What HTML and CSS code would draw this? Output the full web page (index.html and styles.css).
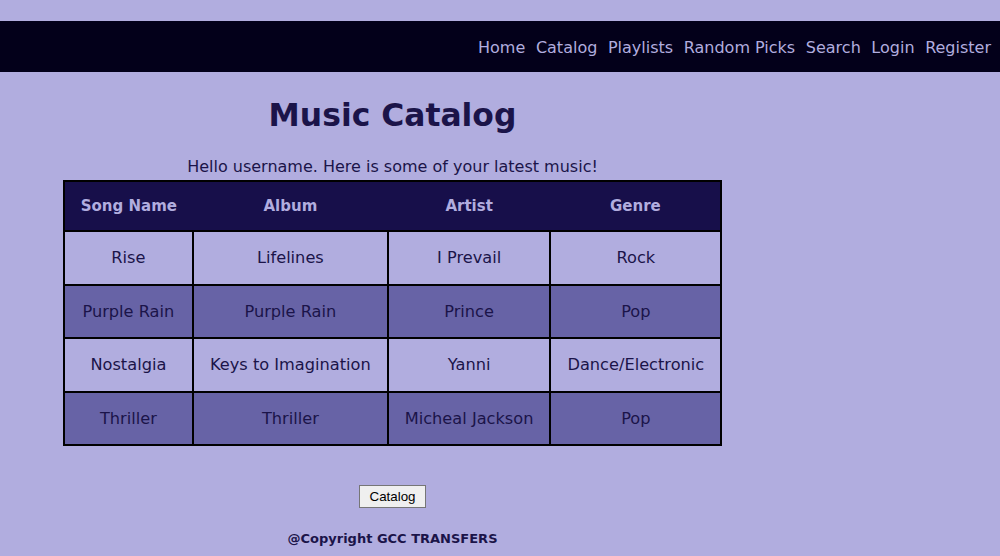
FILE: index.html
```html
<!DOCTYPE html>
<html>
<head>
<meta charset="utf-8">
<title>Music Catalog</title>
<link rel="stylesheet" href="styles.css">
</head>
<body>
<header class="topbar">
  <nav class="nav">
    <a href="#">Home</a>
    <a href="#">Catalog</a>
    <a href="#">Playlists</a>
    <a href="#">Random Picks</a>
    <a href="#">Search</a>
    <a href="#">Login</a>
    <a href="#">Register</a>
  </nav>
</header>
<main class="content">
  <h1 class="title">Music Catalog</h1>
  <p class="greeting">Hello username. Here is some of your latest music!</p>
  <table class="catalog">
    <thead>
      <tr><th>Song Name</th><th>Album</th><th>Artist</th><th>Genre</th></tr>
    </thead>
    <tbody>
      <tr><td>Rise</td><td>Lifelines</td><td>I Prevail</td><td>Rock</td></tr>
      <tr class="alt"><td>Purple Rain</td><td>Purple Rain</td><td>Prince</td><td>Pop</td></tr>
      <tr><td>Nostalgia</td><td>Keys to Imagination</td><td>Yanni</td><td>Dance/Electronic</td></tr>
      <tr class="alt"><td>Thriller</td><td>Thriller</td><td>Micheal Jackson</td><td>Pop</td></tr>
    </tbody>
  </table>
  <div class="actions"><button class="btn">Catalog</button></div>
  <footer class="footer">@Copyright GCC TRANSFERS</footer>
</main>
</body>
</html>
```
FILE: styles.css
```css
html, body {
  margin: 0;
  padding: 0;
}
body {
  background: #b1addf;
  font-family: "DejaVu Sans", Verdana, sans-serif;
  color: #1b1449;
}
.topbar {
  margin-top: 21px;
  height: 51px;
  background: #03001a;
  display: flex;
  align-items: center;
  justify-content: flex-end;
  padding-right: 9px;
  box-sizing: border-box;
  padding-top: 2px;
}
.nav {
  display: flex;
  gap: 10.6px;
}
.nav a {
  color: #b1addf;
  text-decoration: none;
  font-size: 16px;
}
.content {
  width: 785px;
  text-align: center;
}
.title {
  font-size: 31.4px;
  font-weight: bold;
  margin: 25px 0 0;
  color: #1b1449;
}
.greeting {
  font-size: 16px;
  margin: 24px 0 4px;
}
.catalog {
  border-collapse: collapse;
  margin: 0 auto;
  border: 2px solid #000;
}
.catalog th, .catalog td {
  border: 2px solid #000;
  padding: 16.25px 16px;
  font-size: 16.2px;
}
.catalog th {
  background: #170f4a;
  color: #b1addf;
  font-size: 15px;
  padding: 15px 16px;
  border-left: none;
  border-right: none;
}
.catalog tr.alt td {
  background: #6763a6;
}
.actions {
  margin-top: 39px;
}
.btn {
  font-family: "Liberation Sans", Arial, sans-serif;
  font-size: 13.33px;
  color: #000;
  background: #efefef;
  border: 1px solid #767676;
  border-radius: 0;
  padding: 3px 10px;
}
.footer {
  margin-top: 23px;
  font-size: 13px;
  font-weight: bold;
}
```
